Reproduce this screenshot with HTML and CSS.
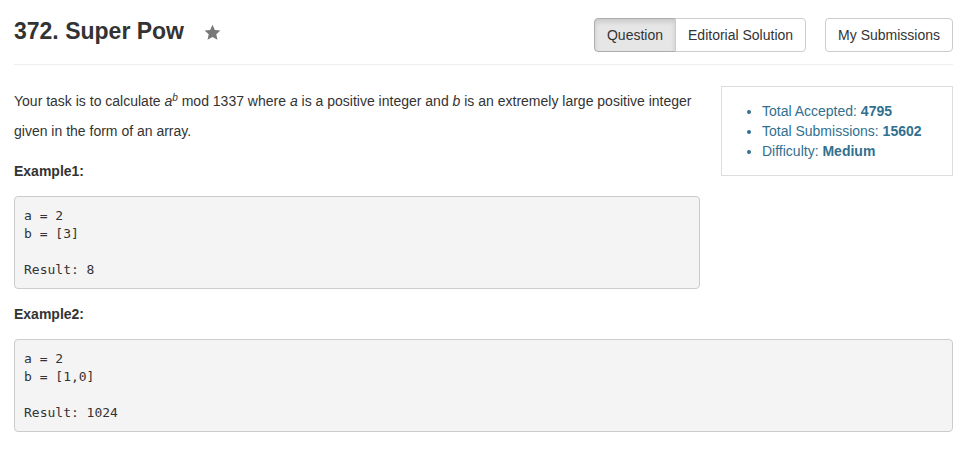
FILE: index.html
```html
<!DOCTYPE html>
<html>
<head>
<meta charset="utf-8">
<link rel="stylesheet" href="styles.css">
</head>
<body>
<div class="page">
  <header class="header">
    <div class="title-wrap">
      <h1 class="title">372. Super Pow</h1>
      <svg class="star" width="17" height="17" viewBox="0 0 24 24" aria-hidden="true"><path d="M12 1.2l3.3 7.2 7.9.8-5.9 5.3 1.7 7.8L12 18.3l-7 4 1.7-7.8L.8 9.2l7.9-.8z" fill="#777"/></svg>
    </div>
    <div class="actions">
      <div class="btn-group">
        <span class="btn active">Question</span>
        <span class="btn">Editorial Solution</span>
      </div>
      <span class="btn single">My Submissions</span>
    </div>
  </header>
  <div class="rule"></div>
  <div class="content">
    <div class="main">
      <p class="text">Your task is to calculate <i>a</i><sup><i>b</i></sup> mod 1337 where <i>a</i> is a positive integer and <i>b</i> is an extremely large positive integer given in the form of an array.</p>
      <p class="text"><b>Example1:</b></p>
      <pre class="code">a = 2
b = [3]

Result: 8</pre>
    </div>
    <aside class="stats">
      <ul class="stat-list">
        <li>Total Accepted: <b>4795</b></li>
        <li>Total Submissions: <b>15602</b></li>
        <li>Difficulty: <b>Medium</b></li>
      </ul>
    </aside>
  </div>
  <p class="text"><b>Example2:</b></p>
  <pre class="code">a = 2
b = [1,0]

Result: 1024</pre>
</div>
</body>
</html>
```

FILE: styles.css
```css
html, body {
  margin: 0;
  padding: 0;
  background: #fff;
}
body {
  font-family: "Liberation Sans", Arial, sans-serif;
  font-size: 14px;
  color: #333;
}
.page {
  width: 939px;
  margin-left: 14px;
}
.header {
  display: flex;
  justify-content: space-between;
  align-items: flex-start;
  padding-top: 18px;
}
.title-wrap {
  display: flex;
  align-items: center;
  height: 27px;
}
.title {
  margin: 0;
  font-size: 23px;
  font-weight: bold;
  line-height: 27px;
  color: #333;
}
.star {
  margin-left: 20px;
  margin-top: 1px;
}
.actions {
  display: flex;
  gap: 19px;
}
.btn-group {
  display: flex;
}
.btn {
  display: inline-block;
  padding: 7px 12px 6px;
  line-height: 19px;
  font-size: 14px;
  color: #333;
  background: #fff;
  border: 1px solid #ccc;
  border-radius: 4px;
  white-space: nowrap;
}
.btn-group .btn:first-child {
  border-top-right-radius: 0;
  border-bottom-right-radius: 0;
}
.btn-group .btn:last-child {
  border-top-left-radius: 0;
  border-bottom-left-radius: 0;
  margin-left: -1px;
}
.btn.active {
  background: #e6e6e6;
  border-color: #adadad;
  box-shadow: inset 0 3px 5px rgba(0,0,0,0.125);
}
.rule {
  height: 1px;
  background: #eee;
  margin-top: 12px;
}
.content {
  display: flex;
  gap: 21px;
  margin-top: 21px;
}
.main {
  width: 686px;
}
.text {
  margin: 0 0 10px;
  line-height: 30px;
}
.text sup {
  line-height: 0;
  font-size: 10px;
  vertical-align: 5px;
}
.code {
  margin: 0 0 10px;
  padding: 10px 9px 9px;
  font-family: "DejaVu Sans Mono", monospace;
  font-size: 13px;
  line-height: 18px;
  color: #333;
  background: #f4f4f4;
  border: 1px solid #ccc;
  border-radius: 4px;
}
.stats {
  width: 232px;
  box-sizing: border-box;
  align-self: flex-start;
  border: 1px solid #ddd;
  padding: 14px 0;
}
.stat-list {
  margin: 0;
  padding-left: 40px;
  line-height: 20px;
  color: #31708f;
}
```
